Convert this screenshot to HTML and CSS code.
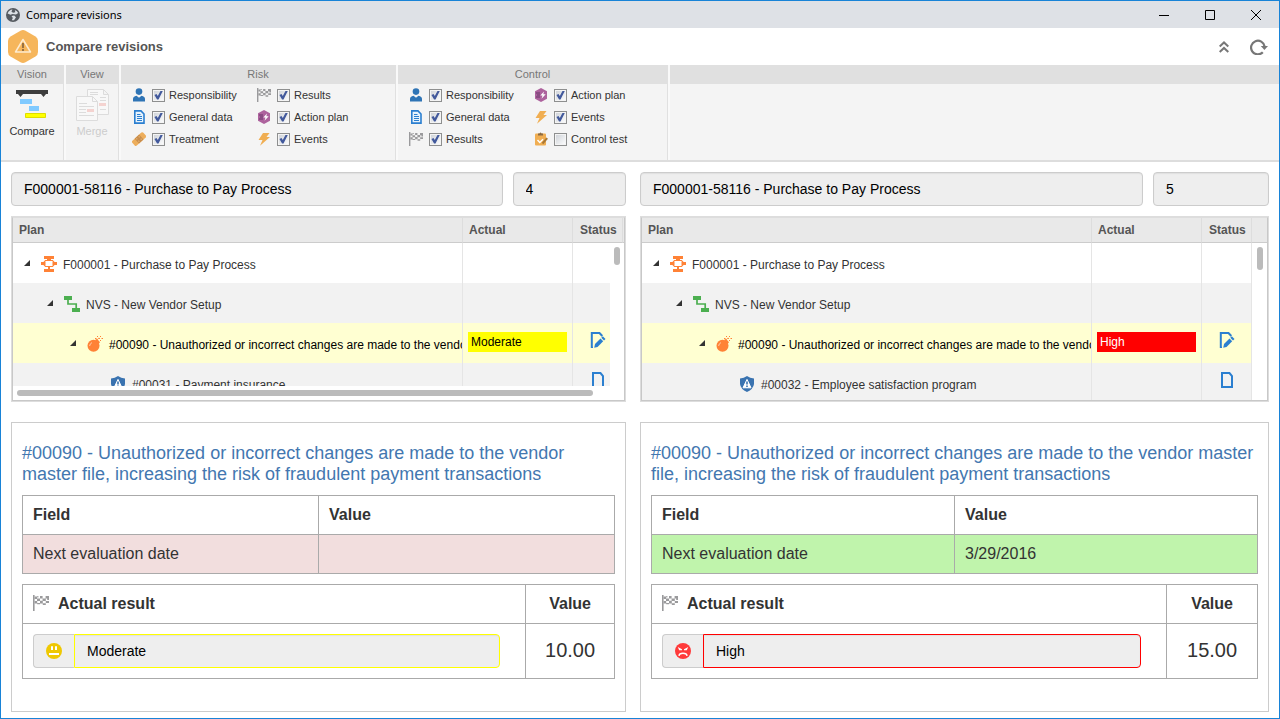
FILE: index.html
```html
<!DOCTYPE html>
<html lang="en">
<head>
<meta charset="utf-8">
<title>Compare revisions</title>
<link rel="stylesheet" href="styles.css">
</head>
<body>
<svg class="sprite" aria-hidden="true">
  <symbol id="i-user" viewBox="0 0 14 14"><circle cx="7" cy="3.6" r="3.3" fill="#2f74b5"/><path d="M1 13.5V11Q1 8.5 4.5 7.8L7 9.8 9.5 7.8Q13 8.5 13 11V13.5Z" fill="#2f74b5"/></symbol>
  <symbol id="i-doc" viewBox="0 0 14 14"><path d="M2.8 .9H9L12 4V13.1H2.8Z" fill="#e8f3fc" stroke="#2b7fd0" stroke-width="1.6"/><path d="M5 4.5H8.5M5 6.5H10M5 8.5H10M5 10.5H10" stroke="#2b7fd0"/></symbol>
  <symbol id="i-patch" viewBox="0 0 14 14"><g transform="rotate(-42 7 7)"><rect x="-.5" y="3.8" width="15" height="6.6" rx="1.5" fill="#edae5c"/><rect x="4" y="3.8" width="6" height="6.6" fill="#c98d4b"/><path d="M5 5.5H6M8 5.5H9M5 8.5H6M8 8.5H9" stroke="#f6d29b"/></g></symbol>
  <symbol id="i-flag" viewBox="0 0 16 16"><path d="M0 0H1.6V16H0Z" fill="#9a9a9c"/><path d="M1.6 1.6H4V4H1.6ZM7 1H9.6V3.4H7ZM12.6 1H16V3.6H12.6ZM4 3.6H7V6H4ZM9.6 3.4H12.8V6H9.6ZM1.6 6H4.2V8.6H1.6ZM7 5.8H9.8V8.4H7ZM12.8 6H16V8H12.8ZM4.2 1H5.4V2.4H4.2ZM4.2 8H7V9.2H4.2ZM9.8 8.2H12.8V10H9.8ZM14.2 3.6H16V5H14.2Z" fill="#9a9a9c"/></symbol>
  <symbol id="i-plan" viewBox="0 0 14 14"><path d="M7 0 13 3.3V10.7L7 14 1 10.7V3.3Z" fill="#ad629d"/><path d="M2 5H6M3 7H6M2 9H6" stroke="#68366b" stroke-width="1.2"/><path d="M10 3.5 6.3 7.5H8.5L7.5 10.8 11.7 6.3H9.3Z" fill="#fff"/></symbol>
  <symbol id="i-bolt" viewBox="0 0 14 14"><path d="M6 1H12.5L9.500 5H13L3 13.8 5.5 8H1.5Z" fill="#f0ae52"/></symbol>
  <symbol id="i-clip" viewBox="0 0 14 14"><rect x="1" y="1.5" width="11" height="12" rx="1" fill="#f0ae52"/><path d="M4 3.5V1.5H5.5Q6.5-.5 7.5 1.5H9V3.5Z" fill="#8b6a42"/><path d="M3.5 8 5.8 10.5 9 7.3" fill="none" stroke="#fff" stroke-width="1.4"/><path d="M8.5 11.5 13.2 6.2" stroke="#a87836" stroke-width="2"/></symbol>
  <symbol id="i-process" viewBox="0 0 16 16"><path d="M3 0H13V3H3ZM6 3H10V4H6ZM7 11H9V13H7ZM3 13H13V16H3Z" fill="#ff8236"/><path d="M4.5 4.5H11.5L13 6.2V8.8L11.5 10.5H4.5L3 8.8V6.2Z" fill="#fff" stroke="#ff8236" stroke-width="1.2"/><path d="M0 6H4.5V9H0ZM11.5 6H16V9H11.5Z" fill="#ff8236"/></symbol>
  <symbol id="i-activity" viewBox="0 0 16 16"><path d="M0 0H8V4H0ZM8 12H16V16H8Z" fill="#4caf50"/><path d="M4 4V8H12.2V12" fill="none" stroke="#4caf50" stroke-width="1.7"/></symbol>
  <symbol id="i-bomb" viewBox="0 0 16 16"><circle cx="6.500" cy="9.800" r="6" fill="#ff8236"/><path d="M8 4 10 2.800 13 6.200 11.5 8Z" fill="#ff8236"/><path d="M10.500 3.500Q11.500 1.500 13 2.500M10.500 0V1M14.500 2.500H16M13.500 0V1M13.500 4V5M8 2.500H9.500" fill="none" stroke="#ff8236"/><path d="M2.6 10Q2.800 7.600 5 6.600" fill="none" stroke="#ffd2b3" stroke-width=".9"/></symbol>
  <symbol id="i-shield" viewBox="0 0 16 16"><path d="M8 0Q11 2.2 15 2.4V8Q14.400 13 8 16 1.6 13 1 8V2.400Q5 2.2 8 0Z" fill="#3a73b0"/><path d="M8 3.4 12 11.8H4Z" fill="#fff" stroke="#fff" stroke-linejoin="round"/><path d="M8 5.500V8.600M8 9.600V11" stroke="#3a73b0" stroke-width="1.6"/></symbol>
  <symbol id="i-file" viewBox="0 0 16 16"><path d="M3 1H10.5L13 4V15H3Z" fill="none" stroke="#2b7fd0" stroke-width="2"/></symbol>
  <symbol id="i-edit" viewBox="0 0 16 16"><path d="M3 15.8H1.8V1H9.5L12.3 4" fill="none" stroke="#2b7fd0" stroke-width="2"/><path d="M4.2 15.8 5 12 10.5 6.5 13.2 9.2 7.5 15Z" fill="#2b7fd0"/><path d="M11.3 5.7 12.8 4.2 15.5 7 14 8.4Z" fill="#2b7fd0"/></symbol>
  <symbol id="i-arrow" viewBox="0 0 6 6"><path d="M6 0V6H0Z" fill="#333"/></symbol>
  <symbol id="i-neutral" viewBox="0 0 16 16"><circle cx="8" cy="8" r="8" fill="#efc802"/><path d="M5 3.300H7V7H5ZM9 3.300H11V7H9ZM3 10H13V12H3Z" fill="#fff"/></symbol>
  <symbol id="i-sad" viewBox="0 0 16 16"><circle cx="8" cy="8" r="8" fill="#ff3a3a"/><path d="M2.8 4 7 6.3V7.2H4.2ZM13.2 4 9 6.3V7.2H11.8Z" fill="#fff"/><path d="M4 12.8Q4.3 10.2 8 10.2T12 12.8" fill="none" stroke="#fff" stroke-width="1.5"/></symbol>
</svg>

<div class="window">
  <header class="titlebar">
    <svg class="globe" viewBox="0 0 14 14" aria-hidden="true"><circle cx="7" cy="7" r="7" fill="#555a60"/><path d="M1.600 5.500Q3 1.800 6.500 1.500L5.400 3.400 7 4.800 9.300 4.200 8.800 1.900Q11.300 2.800 12.200 5L10 6.500 6.500 6 4.500 6.800ZM5.500 8 8.2 7.600 10 9.200 8 12.300H5.800L6.800 10Z" fill="#dde1e6"/></svg>
    <span class="titlebar-text">Compare revisions</span>
    <div class="window-buttons">
      <button type="button" aria-label="Minimize"><svg viewBox="0 0 10 10"><path d="M0 5.5H10" stroke="#000"/></svg></button>
      <button type="button" aria-label="Maximize"><svg viewBox="0 0 10 10"><path d="M.5 .5H9.5V9.5H.5Z" fill="none" stroke="#000"/></svg></button>
      <button type="button" aria-label="Close"><svg viewBox="0 0 10 10"><path d="M0 0 10 10M10 0 0 10" stroke="#000"/></svg></button>
    </div>
  </header>

  <div class="page-head">
    <svg class="hexagon" viewBox="0 0 30 33" aria-hidden="true"><path d="M12.5 .8Q15-.6 17.5 .8L27.5 6.5Q30 8 30 11V22Q30 25 27.5 26.5L17.5 32.2Q15 33.6 12.5 32.2L2.5 26.5Q0 25 0 22V11Q0 8 2.5 6.5Z" fill="#f6b65c"/><path d="M15 9.5 22.5 22H7.5Z" fill="none" stroke="#fdebd0" stroke-width="1.5" stroke-linejoin="round"/><path d="M15 13V18M15 19V21" stroke="#8e6b40" stroke-width="1.8"/></svg>
    <h1>Compare revisions</h1>
    <div class="page-actions">
      <button type="button" aria-label="Collapse toolbar"><svg class="chevrons" viewBox="0 0 10 12"><path d="M.7 5.4 5 1.4 9.3 5.4M.7 10.9 5 6.9 9.3 10.9" fill="none" stroke="#777" stroke-width="2"/></svg></button>
      <button type="button" aria-label="Refresh"><svg class="refresh" viewBox="0 0 18 16"><path d="M12.800 13.200A6.800 6.800 0 1 1 14.600 7.500" fill="none" stroke="#777" stroke-width="2.2"/><path d="M10.8 7H18L14.4 11Z" fill="#777"/></svg></button>
    </div>
  </div>

  <div class="ribbon">
    <section class="group group-vision">
      <h2>Vision</h2>
      <button type="button" class="tool"><svg viewBox="0 0 34 32" aria-hidden="true"><path d="M1 1H33V5H31L28.5 8 26 5H8L5.500 8 3 5H1Z" fill="#3d3d3d"/><path d="M5 10H17V15H5ZM14 17H24V22H14Z" fill="#80caff"/><path d="M10.500 24.500H30.500V28.500H10.500Z" fill="#ff0" stroke="#dede00"/></svg>Compare</button>
    </section>
    <section class="group group-view">
      <h2>View</h2>
      <button type="button" class="tool" disabled><svg viewBox="0 0 34 32" aria-hidden="true"><g fill="#f8f8f8" stroke="#dcdcdc"><path d="M12.500 .5H28.500L33.500 5.500V25.500H12.500ZM28.500 .5V5.500H33.500"/><path d="M15 3.500H23M15 5.500H23M25 8.500H31M25 11.500H31M25 20.500H31"/><path d="M1.500 7.500H17.500L22.500 12.500V31.500H1.500ZM17.500 7.500V12.500H22.500"/><path d="M4 14.500H12M4 17.500H19M4 20.500H11M4 23.500H11M4 26.500H19"/></g><path d="M12 20H19V23H12ZM24 14H31V17H24Z" fill="#f4d3d0"/></svg>Merge</button>
    </section>
    <section class="group group-risk">
      <h2>Risk</h2>
      <div class="options">
        <label><svg><use href="#i-user"/></svg><input type="checkbox" checked>Responsibility</label>
        <label><svg><use href="#i-doc"/></svg><input type="checkbox" checked>General data</label>
        <label><svg><use href="#i-patch"/></svg><input type="checkbox" checked>Treatment</label>
        <label><svg><use href="#i-flag"/></svg><input type="checkbox" checked>Results</label>
        <label><svg><use href="#i-plan"/></svg><input type="checkbox" checked>Action plan</label>
        <label><svg><use href="#i-bolt"/></svg><input type="checkbox" checked>Events</label>
      </div>
    </section>
    <section class="group group-control">
      <h2>Control</h2>
      <div class="options">
        <label><svg><use href="#i-user"/></svg><input type="checkbox" checked>Responsibility</label>
        <label><svg><use href="#i-doc"/></svg><input type="checkbox" checked>General data</label>
        <label><svg><use href="#i-flag"/></svg><input type="checkbox" checked>Results</label>
        <label><svg><use href="#i-plan"/></svg><input type="checkbox" checked>Action plan</label>
        <label><svg><use href="#i-bolt"/></svg><input type="checkbox" checked>Events</label>
        <label><svg><use href="#i-clip"/></svg><input type="checkbox">Control test</label>
      </div>
    </section>
    <div class="group group-rest"><div class="band"></div></div>
  </div>

  <main class="revisions">
    <section class="revision">
      <div class="fields">
        <input class="field" type="text" readonly aria-label="Process" value="F000001-58116 - Purchase to Pay Process">
        <input class="field" type="text" readonly aria-label="Revision" value="4">
      </div>
      <div class="grid"><div class="viewport">
        <table class="tree">
          <colgroup><col><col class="c-actual"><col class="c-status"><col class="c-edge"></colgroup>
          <thead><tr><th>Plan</th><th>Actual</th><th>Status</th><th></th></tr></thead>
          <tbody>
            <tr><td><div class="node level-0"><svg class="arrow"><use href="#i-arrow"/></svg><svg class="icon"><use href="#i-process"/></svg><span>F000001 - Purchase to Pay Process</span></div></td><td></td><td></td><td></td></tr>
            <tr><td><div class="node level-1"><svg class="arrow"><use href="#i-arrow"/></svg><svg class="icon"><use href="#i-activity"/></svg><span>NVS - New Vendor Setup</span></div></td><td></td><td></td><td></td></tr>
            <tr class="selected"><td><div class="node level-2"><svg class="arrow"><use href="#i-arrow"/></svg><svg class="icon"><use href="#i-bomb"/></svg><span>#00090 - Unauthorized or incorrect changes are made to the vendor</span></div></td><td><div class="level moderate">Moderate</div></td><td><svg class="status"><use href="#i-edit"/></svg></td><td></td></tr>
            <tr><td><div class="node level-3"><svg class="icon"><use href="#i-shield"/></svg><span>#00031 - Payment insurance</span></div></td><td></td><td><svg class="status"><use href="#i-file"/></svg></td><td></td></tr>
          </tbody>
        </table>
        <div class="scroll-y"><div class="thumb"></div></div>
        <div class="scroll-x"><div class="thumb"></div></div>
      </div></div>
      <article class="detail">
        <h2>#00090 - Unauthorized or incorrect changes are made to the vendor master file, increasing the risk of fraudulent payment transactions</h2>
        <table class="data halves">
          <thead><tr><th>Field</th><th>Value</th></tr></thead>
          <tbody><tr class="removed"><td>Next evaluation date</td><td></td></tr></tbody>
        </table>
        <table class="data result">
          <thead><tr><th><svg class="icon"><use href="#i-flag"/></svg>Actual result</th><th>Value</th></tr></thead>
          <tbody><tr><td><div class="input-group"><span class="addon"><svg class="icon"><use href="#i-neutral"/></svg></span><input class="field yellow" type="text" readonly aria-label="Actual result" value="Moderate"></div></td><td>10.00</td></tr></tbody>
        </table>
      </article>
    </section>

    <section class="revision wide">
      <div class="fields">
        <input class="field" type="text" readonly aria-label="Process" value="F000001-58116 - Purchase to Pay Process">
        <input class="field" type="text" readonly aria-label="Revision" value="5">
      </div>
      <div class="grid"><div class="viewport">
        <table class="tree">
          <colgroup><col><col class="c-actual"><col class="c-status"><col class="c-gutter"></colgroup>
          <thead><tr><th>Plan</th><th>Actual</th><th>Status</th><th></th></tr></thead>
          <tbody>
            <tr><td><div class="node level-0"><svg class="arrow"><use href="#i-arrow"/></svg><svg class="icon"><use href="#i-process"/></svg><span>F000001 - Purchase to Pay Process</span></div></td><td></td><td></td><td></td></tr>
            <tr><td><div class="node level-1"><svg class="arrow"><use href="#i-arrow"/></svg><svg class="icon"><use href="#i-activity"/></svg><span>NVS - New Vendor Setup</span></div></td><td></td><td></td><td></td></tr>
            <tr class="selected"><td><div class="node level-2"><svg class="arrow"><use href="#i-arrow"/></svg><svg class="icon"><use href="#i-bomb"/></svg><span>#00090 - Unauthorized or incorrect changes are made to the vendor</span></div></td><td><div class="level high">High</div></td><td><svg class="status"><use href="#i-edit"/></svg></td><td></td></tr>
            <tr><td><div class="node level-3"><svg class="icon"><use href="#i-shield"/></svg><span>#00032 - Employee satisfaction program</span></div></td><td></td><td><svg class="status"><use href="#i-file"/></svg></td><td></td></tr>
          </tbody>
        </table>
        <div class="scroll-y"><div class="thumb"></div></div>
      </div></div>
      <article class="detail">
        <h2>#00090 - Unauthorized or incorrect changes are made to the vendor master file, increasing the risk of fraudulent payment transactions</h2>
        <table class="data halves">
          <thead><tr><th>Field</th><th>Value</th></tr></thead>
          <tbody><tr class="added"><td>Next evaluation date</td><td>3/29/2016</td></tr></tbody>
        </table>
        <table class="data result">
          <thead><tr><th><svg class="icon"><use href="#i-flag"/></svg>Actual result</th><th>Value</th></tr></thead>
          <tbody><tr><td><div class="input-group"><span class="addon"><svg class="icon"><use href="#i-sad"/></svg></span><input class="field red" type="text" readonly aria-label="Actual result" value="High"></div></td><td>15.00</td></tr></tbody>
        </table>
      </article>
    </section>
  </main>
</div>
</body>
</html>
```

FILE: styles.css
```css
* { box-sizing: border-box; }
body { margin: 0; background: #fff; color: #333; font: 12px/16px "Liberation Sans", Arial, sans-serif; }
h1, h2 { margin: 0; }
svg { display: block; flex: none; }
button { border: 0; padding: 0; background: none; color: inherit; font: inherit; }
input { font: inherit; margin: 0; }
.sprite { position: absolute; width: 0; height: 0; }

.window { display: flex; flex-direction: column; min-height: 100vh; border: 1px solid #1883d7; }

/* Title bar */
.titlebar { display: flex; align-items: center; height: 27px; padding-left: 5px; background: #dee1e6; color: #000; }
.globe { width: 14px; height: 14px; margin-right: 6px; }
.titlebar-text { flex: 1; font-family: "Noto Sans", "Open Sans", sans-serif; font-size: 11px; }
.window-buttons { display: flex; }
.window-buttons button { display: grid; place-items: center; width: 46px; height: 27px; }
.window-buttons svg { width: 10px; height: 10px; }

/* Page heading */
.page-head { display: flex; align-items: center; height: 37px; padding: 0 11px 0 7px; }
.hexagon { width: 30px; height: 33px; }
h1 { flex: 1; margin-left: 8px; font-size: 13px; color: #555; }
.page-actions { display: flex; align-items: center; gap: 21px; }
.chevrons { width: 10px; height: 12px; }
.refresh { width: 18px; height: 16px; }

/* Ribbon */
.ribbon { display: flex; gap: 2px; height: 97px; border-bottom: 2px solid #ddd; background: #f9f9f9; font-size: 11px; }
.group { background: #f4f4f4; border-right: 1px solid #e0e0e0; }
.group h2, .band { height: 19px; background: #e0e0e0; color: #777; font-size: 11px; line-height: 18px; font-weight: normal; text-align: center; }
.group-vision { width: 63px; }
.group-view { width: 53px; }
.group-risk { width: 275px; }
.group-control { width: 270px; }
.group-rest { flex: 1; border-right: 0; }
.tool { display: flex; flex-direction: column; align-items: center; gap: 2px; width: 100%; padding-top: 5px; }
.tool svg { width: 34px; height: 32px; }
.tool:disabled { color: #ccc; }
.options { display: grid; grid-template-rows: repeat(3, 22px); grid-auto-flow: column; grid-auto-columns: 125px; padding-left: 11px; }
.options label { display: flex; align-items: center; }
.options svg { width: 14px; height: 14px; margin-right: 6px; }
.options input { display: grid; place-items: center; appearance: none; width: 13px; height: 13px; margin-right: 4px; border: 1px solid #8e8f8f; background: linear-gradient(135deg, #ccd0d6, #fff); box-shadow: inset 0 0 0 1px #f4f4f4; }
.options input:checked::before { content: ""; width: 9px; height: 9px; background: #42599c; clip-path: polygon(5% 50%, 28% 38%, 42% 60%, 75% 0, 100% 0, 50% 100%, 34% 100%); }

/* Revision columns */
.revisions { flex: 1; display: grid; grid-template-columns: 615fr 629fr; gap: 14px; padding: 10px 10px 6px; }
.revision { display: flex; flex-direction: column; min-width: 0; }
.fields { display: grid; grid-template-columns: 13fr 3fr; gap: 10px; margin-bottom: 10px; }
.field { min-width: 0; height: 34px; padding: 0 12px; border: 1px solid #ccc; border-radius: 4px; background: #eee; box-shadow: inset 0 1px 1px #dfdfdf; color: #000; font-size: 14px; }

/* Tree grid */
.grid { border: 1px solid #ddd; margin-bottom: 20px; }
.viewport { position: relative; height: 184px; overflow: hidden; border: 1px solid #c8c8c8; border-top-color: #ddd; }
.tree { width: 100%; table-layout: fixed; border-collapse: separate; border-spacing: 0; }
.c-actual { width: 110px; }
.c-status { width: 50px; }
.c-edge { width: 1px; }
.c-gutter { width: 15px; }
.tree th { height: 25px; padding: 0 6px; border-bottom: 1px solid #ccc; border-right: 1px solid #ddd; background: #e9e9e9; color: #555; text-align: left; }
.tree th:nth-child(3) { padding-left: 7px; }
.tree td { height: 40px; padding: 9px 5px 0; border-right: 1px solid #e5e5e5; vertical-align: top; }
.tree td:first-child { padding: 0; }
.tree th:last-child, .tree td:last-child { padding: 0; border-right: 0; }
.tree tr:nth-child(even) td { background: #f2f2f2; }
.tree tr.selected td { background: #ffffd2; color: #000; }
.node { display: flex; align-items: center; height: 40px; padding-top: 3px; overflow: hidden; white-space: nowrap; }
.node .icon { margin: 0 6px 2px 0; }
.arrow { width: 6px; height: 6px; margin: 0 11px 3px 0; }
.icon, .status { width: 16px; height: 16px; }
.status { margin: 0 auto; }
.level-0 { padding-left: 11px; }
.level-1 { padding-left: 34px; }
.level-2 { padding-left: 57px; }
.level-3 { padding-left: 97px; }
.level { height: 20px; padding: 0 3px; line-height: 20px; }
.moderate { background: #ff0; color: #000; }
.high { background: #f00; color: #fff; }
.scroll-y { position: absolute; top: 25px; right: 0; bottom: 0; width: 14px; padding: 4px; background: #fff; }
.scroll-x { position: absolute; left: 0; right: 0; bottom: 0; height: 14px; padding: 4px 31px 4px 4px; background: #fff; }
.thumb { height: 6px; border-radius: 3px; background: #bbb; }
.scroll-y .thumb { height: 18px; }
.wide .scroll-y { width: 15px; padding-left: 5px; }
.wide .scroll-y .thumb { height: 23px; }

/* Detail panels */
.detail { flex: 1; padding: 20px 10px 10px; border: 1px solid #ccc; }
.detail h2 { margin-bottom: 10px; color: #4377b0; font-size: 18px; line-height: 21px; font-weight: normal; }
.data { width: 100%; margin-bottom: 10px; table-layout: fixed; border-collapse: collapse; font-size: 16px; line-height: 18px; }
.data th, .data td { height: 39px; padding: 0 10px; border: 1px solid #aaa; text-align: left; }
.removed { background: #f2dede; }
.added { background: #c0f4ac; }
.result th:last-child, .result td:last-child { width: 15%; text-align: center; }
.result th .icon { display: inline-block; margin-right: 9px; vertical-align: -2px; }
.result td { height: 55px; }
.result td:last-child { padding-bottom: 2px; font-size: 20px; }
.input-group { display: flex; margin-right: 15px; }
.addon { display: grid; place-items: center; width: 41px; border: 1px solid #ccc; border-right: 0; border-radius: 4px 0 0 4px; background: #eee; }
.input-group .field { flex: 1; border-radius: 0 4px 4px 0; }
.yellow { border-color: #ff0; }
.red { border-color: #f00; }
```
